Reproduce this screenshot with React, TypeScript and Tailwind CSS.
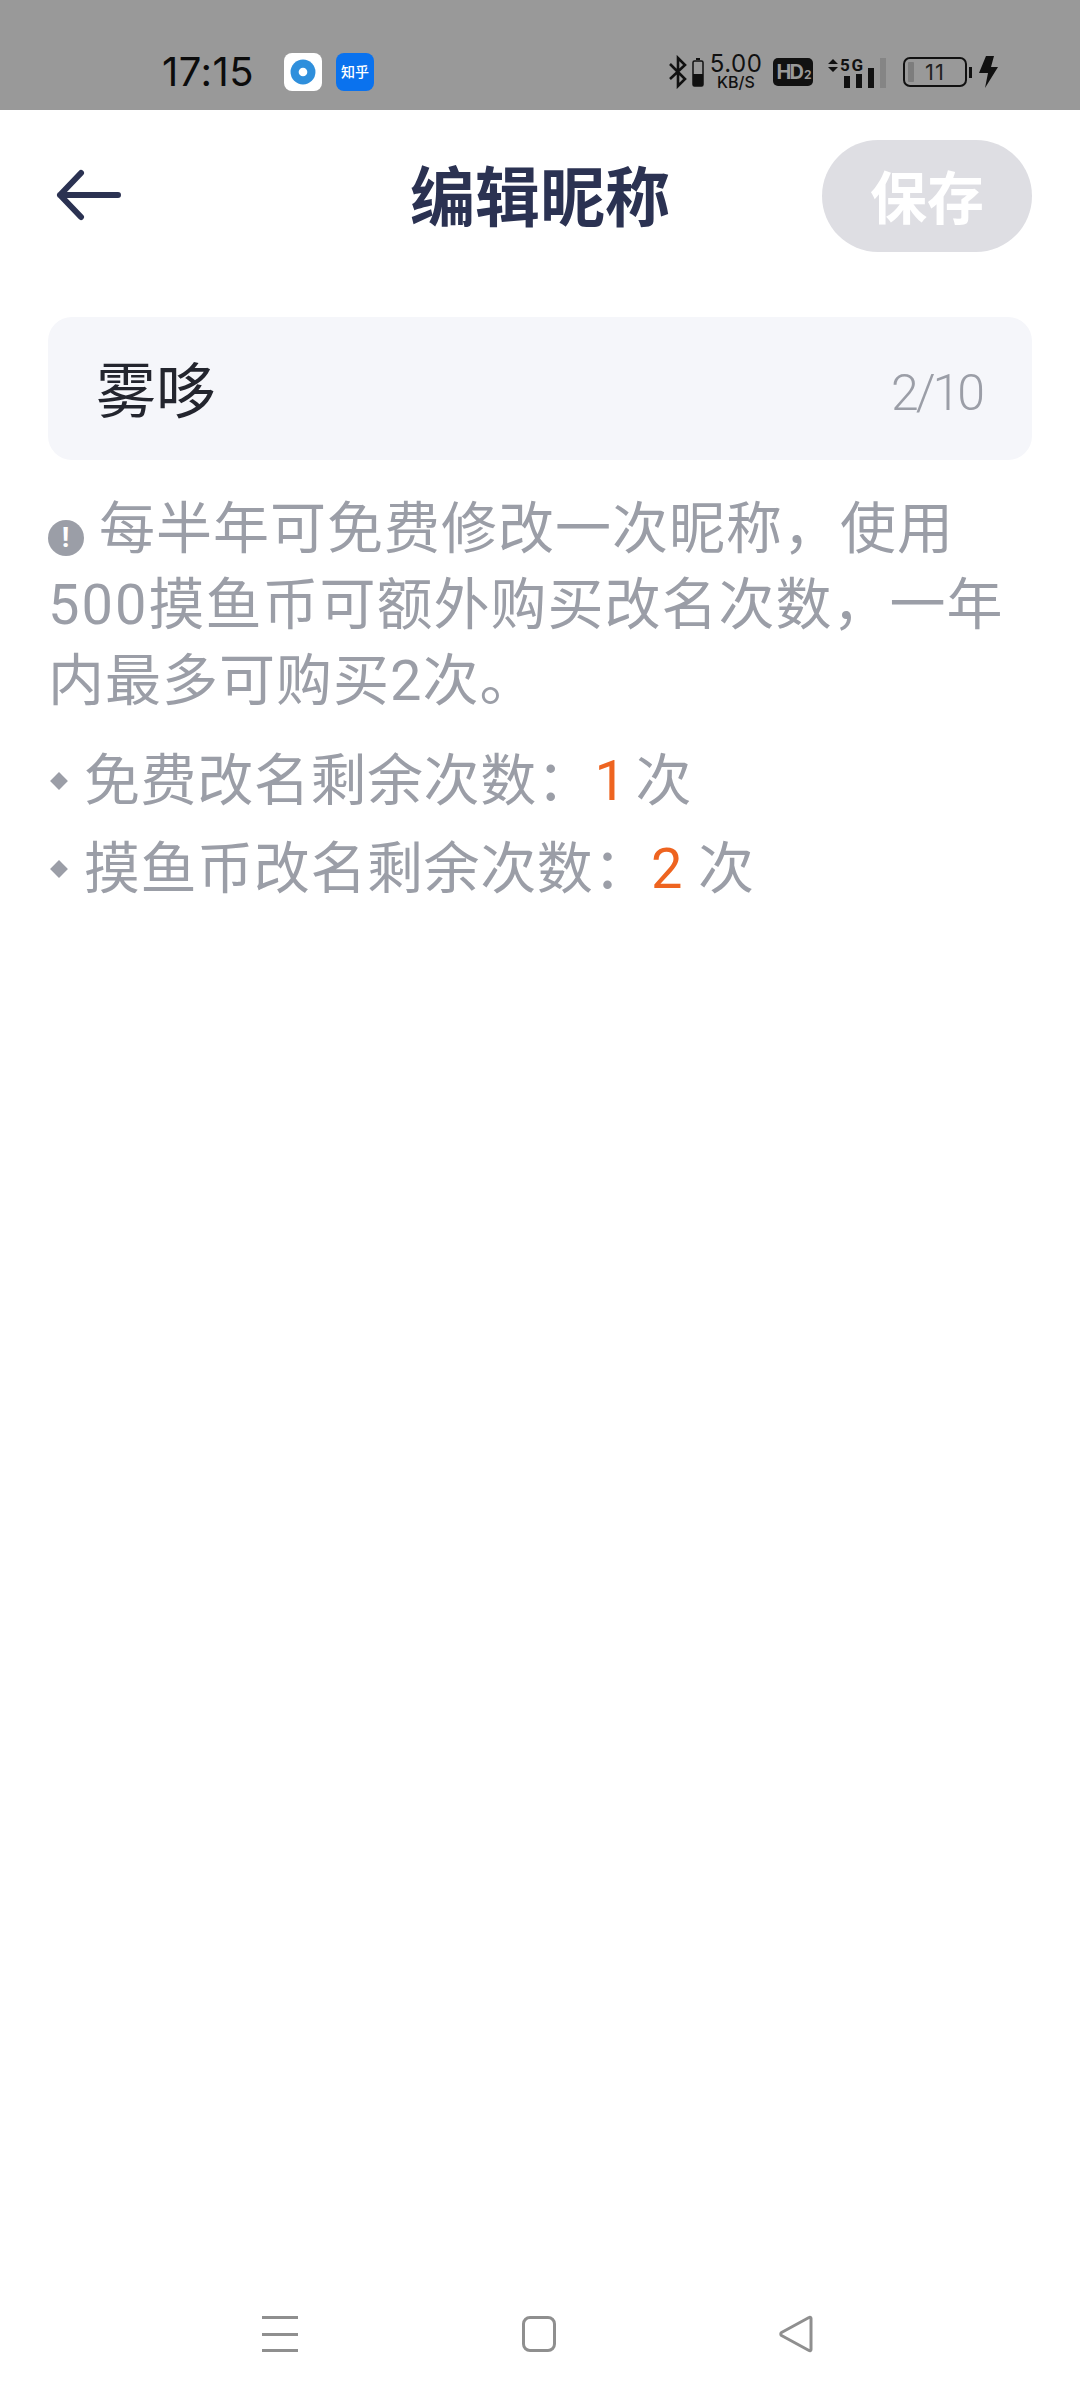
const base = { fontFamily: '"Roboto", "Noto Sans CJK SC", sans-serif' };

function StatusBar() {
  return (
    <div className="flex h-[110px] shrink-0 items-center bg-[#999999] pt-[34px] text-[#111]" style={{ fontFamily: '"Inter", "Noto Sans CJK SC", sans-serif' }}>
      <span className="ml-[162px] w-[96px] whitespace-nowrap text-[40px] leading-none tracking-[0.5px] text-[#0c0c0c]">17:15</span>
      <div className="ml-[26px] flex h-[38px] w-[38px] items-center justify-center rounded-[8px] bg-white">
        <svg width="26" height="26" viewBox="0 0 24 24">
          <circle cx="12" cy="12" r="11.5" fill="#2f8fdc" />
          <circle cx="12" cy="12" r="4" fill="#fff" />
        </svg>
      </div>
      <div className="ml-[14px] flex h-[38px] w-[38px] items-center justify-center rounded-[8px] bg-[#0a72ee] text-[14px] font-medium leading-none text-white">知乎</div>
      <div className="ml-auto mr-[82px] flex items-center">
        <svg width="36" height="34" viewBox="0 0 36 34" fill="none">
          <path d="M2 9l15 15-7 7V3l7 7L2 24" stroke="#111" strokeWidth="2.6" />
          <path d="M28 3h4v2h-4z" fill="#111" />
          <rect x="25" y="6" width="10" height="25" rx="1.5" stroke="#111" strokeWidth="1.5" />
          <rect x="25" y="19" width="10" height="12" fill="#111" />
        </svg>
        <div className="ml-[6px] flex w-[52px] flex-col items-center leading-none">
          <span className="text-[24px] leading-[20px] tracking-[0.5px]">5.00</span>
          <span className="text-[16px] font-medium leading-[16px]">KB/S</span>
        </div>
        <div className="ml-[11px] flex h-[28px] w-[40px] items-center justify-center rounded-[5px] bg-[#111] text-[20px] font-bold leading-none tracking-[-2px] text-[#999]">
          HD<span className="mt-[6px] ml-[2px] text-[12px] leading-none">2</span>
        </div>
        <svg className="ml-[14px]" width="60" height="34" viewBox="0 0 60 34">
          <path d="M1 9l5-5 5 5zM1 12l5 5 5-5z" fill="#111" />
          <text x="13" y="16" fontSize="17" fontWeight="700" fill="#111" fontFamily="Roboto, sans-serif" textLength="23">5G</text>
          <rect x="17" y="21" width="6" height="12" fill="#111" />
          <rect x="29" y="19" width="6" height="14" fill="#111" />
          <rect x="41" y="13" width="6" height="20" fill="#111" />
          <rect x="53" y="3" width="6" height="30" fill="#858585" />
        </svg>
        <div className="relative ml-[16px] flex h-[30px] w-[64px] items-center justify-center rounded-[7px] border-[2px] border-[#111] text-[22px] leading-none text-[#222]">
          <div className="absolute left-[3px] top-[3px] h-[20px] w-[6px] rounded-[1px] bg-[#7d7d7d]" />
          <span className="tracking-[1px]">11</span>
        </div>
        <div className="ml-[2px] h-[11px] w-[3px] bg-[#111]" />
        <svg className="ml-[6px]" width="20" height="32" viewBox="0 0 20 32">
          <path d="M8 0h8l-3 11h7L7 32l3-15H1z" fill="#111" />
        </svg>
      </div>
    </div>
  );
}

function Header() {
  return (
    <header className="relative mt-[30px] flex h-[112px] items-center justify-center pt-[6px]">
      <button className="absolute left-[56px] top-[29px]" aria-label="back">
        <svg width="66" height="52" viewBox="0 0 66 52" fill="none" className="block">
          <path d="M25 4L4 26l21 22M4 26h58" stroke="#2b3252" strokeWidth="6" strokeLinecap="round" strokeLinejoin="round" />
        </svg>
      </button>
      <h1 className="text-[65px] font-bold leading-none text-[#2b3252]">编辑昵称</h1>
      <button className="absolute right-[48px] top-0 flex h-[112px] w-[210px] items-center justify-center rounded-full bg-[#dedee3] pt-[6px] text-[57px] font-bold leading-none text-white">保存</button>
    </header>
  );
}

function CountRow({ label, n, gap }: { label: string; n: string; gap: string }) {
  return (
    <div className="flex h-[88px] items-center">
      <div className="ml-[4px] h-[14px] w-[14px] rotate-45 scale-90 bg-[#9b9ea7]" />
      <span className="ml-[18px] text-[56px] leading-none tracking-[0.6px] text-[#9b9ea7]">
        {label}
        <span className="ml-[1px] text-[#ee6420]">{n}</span>
        <span className={gap}>次</span>
      </span>
    </div>
  );
}

export default function App() {
  return (
    <div className="flex min-h-[2400px] w-[1080px] flex-col bg-white" style={base}>
      <StatusBar />
      <Header />
      <main className="px-[48px]">
        <div className="mt-[65px] flex h-[143px] items-center justify-between rounded-[24px] bg-[#f5f6fa] pl-[48px] pr-[50px] pt-[8px]">
          <span className="text-[60px] leading-none text-[#23252e]">雾哆</span>
          <span className="text-[50px] font-light leading-none tracking-[-3px] text-[#9b9ea7]">2/10</span>
        </div>
        <p className="mt-[31px] w-[984px] text-[56px] leading-[76px] tracking-[1px] text-[#9b9ea7]">
          <span className="mr-[15px] inline-flex h-[36px] w-[36px] items-center justify-center rounded-full bg-[#9b9ea7] align-[1px] text-[28px] font-bold leading-none text-white">!</span>
          每半年可免费修改一次昵称，使用<span className="tracking-[2px]">500</span>摸鱼币可额外购买改名次数，一年内最多可购买2次。
        </p>
        <div className="mt-[18px]">
          <CountRow label="免费改名剩余次数：" n="1" gap="ml-[9px]" />
          <CountRow label="摸鱼币改名剩余次数：" n="2" gap="ml-[15px]" />
        </div>
      </main>
      <nav className="mt-auto mb-[46px] flex h-[40px] items-center">
        <div className="ml-[262px] flex h-[36px] w-[36px] flex-col justify-between">
          <div className="h-[3px] bg-[#8f8f8f]" />
          <div className="h-[3px] bg-[#8f8f8f]" />
          <div className="h-[3px] bg-[#8f8f8f]" />
        </div>
        <div className="ml-[224px] h-[36px] w-[34px] rounded-[8px] border-[3px] border-[#8f8f8f]" />
        <svg className="ml-[222px]" width="36" height="38" viewBox="0 0 36 38" fill="none">
          <path d="M33 3.5c0-1-1-1.6-2-1L3.5 17.5c-1 .7-1 2.2 0 3L31 35.5c1 .6 2 0 2-1z" stroke="#8f8f8f" strokeWidth="3" strokeLinejoin="round" />
        </svg>
      </nav>
    </div>
  );
}
